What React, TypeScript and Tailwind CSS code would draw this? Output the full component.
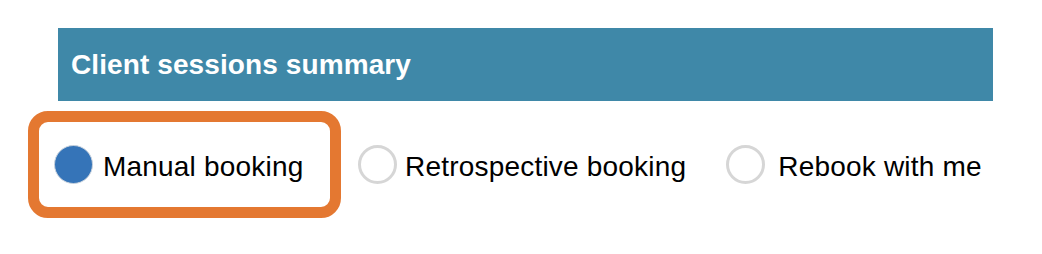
import React from "react";

function Radio({ checked }: { checked?: boolean }) {
  return checked ? (
    <span className="block w-[39px] h-[39px] shrink-0 rounded-full bg-[#3574b8] border border-[#c9d3de]" />
  ) : (
    <span className="block w-[39px] h-[39px] shrink-0 rounded-full bg-white border-[3px] border-[#d6d6d6]" />
  );
}

export default function App() {
  return (
    <div
      className="w-[1042px] h-[254px] bg-white pt-[28px]"
      style={{ fontFamily: '"Liberation Sans", Arial, Helvetica, sans-serif' }}
    >
      <div className="ml-[58px] w-[935px] h-[73px] bg-[#3f88a8] flex items-center pl-[13px]">
        <span className="text-white font-bold text-[28px] leading-none tracking-[0.1px]">Client sessions summary</span>
      </div>
      <div className="mt-[10px] ml-[28px] flex items-center text-[28px] text-black leading-none">
        <div className="w-[313px] h-[107px] border-[11px] border-[#e47831] rounded-[20px] flex items-center pl-[15px] gap-[10px]">
          <Radio checked />
          <span className="pt-[5px] tracking-[0.2px]">Manual booking</span>
        </div>
        <div className="ml-[17px] flex items-center gap-[8px]">
          <Radio />
          <span className="pt-[5px] tracking-[0.2px]">Retrospective booking</span>
        </div>
        <div className="ml-[40px] flex items-center gap-[13px]">
          <Radio />
          <span className="pt-[5px] tracking-[0.2px]">Rebook with me</span>
        </div>
      </div>
    </div>
  );
}
